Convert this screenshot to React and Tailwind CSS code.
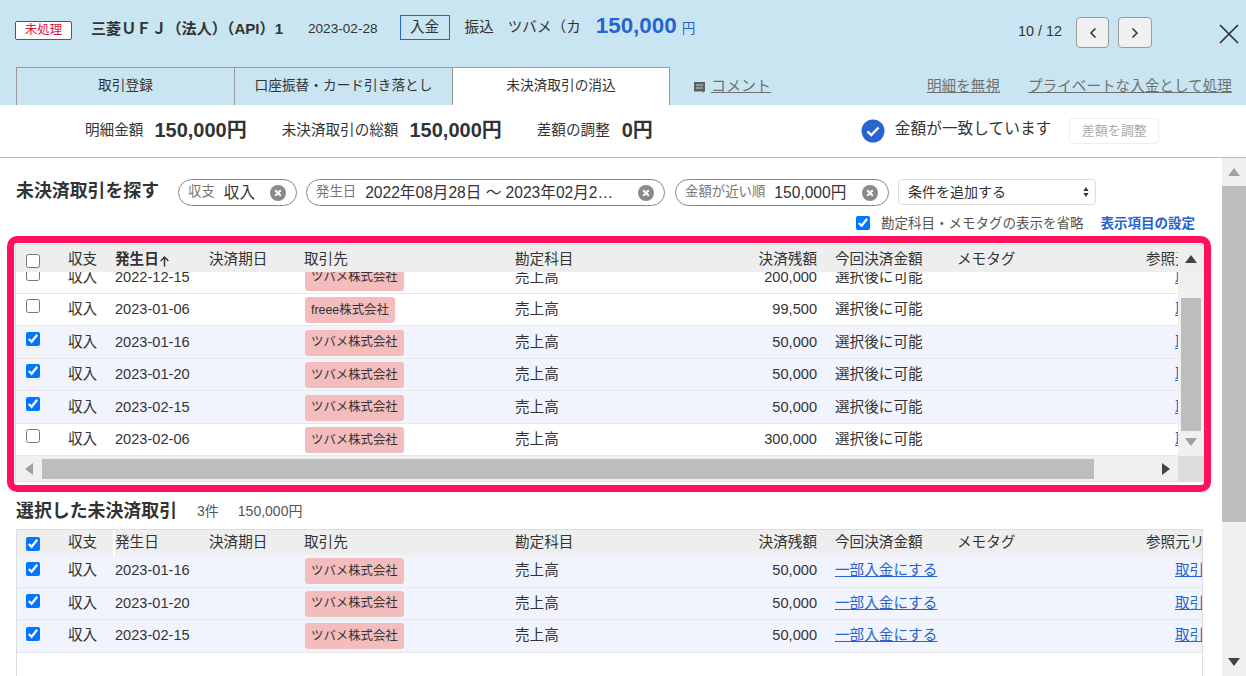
import React from 'react';
import { ChevronLeft, ChevronRight } from 'lucide-react';

const GRID = 'grid grid-cols-[52px_47px_94px_95px_211px_160px_142px_18px_122px_189px_1fr] items-center';

const searchRows = [
  { date: '2022-12-15', partner: 'ツバメ株式会社', amount: '200,000', checked: false },
  { date: '2023-01-06', partner: 'freee株式会社', amount: '99,500', checked: false },
  { date: '2023-01-16', partner: 'ツバメ株式会社', amount: '50,000', checked: true },
  { date: '2023-01-20', partner: 'ツバメ株式会社', amount: '50,000', checked: true },
  { date: '2023-02-15', partner: 'ツバメ株式会社', amount: '50,000', checked: true },
  { date: '2023-02-06', partner: 'ツバメ株式会社', amount: '300,000', checked: false },
];

const selectedRows = [
  { date: '2023-01-16' },
  { date: '2023-01-20' },
  { date: '2023-02-15' },
];

// full-width letters and brackets, as the bank feed writes them
const BANK_NAME = '三菱\uFF35\uFF26\uFF2A\uFF08法人\uFF09\uFF08API\uFF091';
const PAYEE = 'ツバメ\uFF08カ';

const Check = ({ checked, lift }) => (
  <input type="checkbox" checked={checked} readOnly className={`w-[14px] h-[14px] ml-[10px] m-0 accent-[#0075ff] ${lift}`} />
);

const Partner = ({ name }) => (
  <span className="justify-self-start inline-flex items-center h-[26px] px-[6px] ml-px rounded-[3px] bg-[#f4bdbd] text-[12.4px] whitespace-nowrap">{name}</span>
);

const Cross = () => (
  <svg width="16" height="16" viewBox="0 0 16 16" className="shrink-0">
    <circle cx="8" cy="8" r="8" fill="#8a8a8a" />
    <path d="M5.2 5.2l5.6 5.6M10.8 5.2l-5.6 5.6" stroke="#fff" strokeWidth="2" />
  </svg>
);

const Chip = ({ label, value, width }) => (
  <div className={`flex items-center h-[27px] pl-[9px] pr-[10px] border border-[#888] rounded-full ${width}`}>
    <span className="text-[13.4px] text-[#777] whitespace-nowrap">{label}</span>
    <span className="ml-[9px] text-[15.6px] whitespace-nowrap">{value}</span>
    <span className="ml-auto"><Cross /></span>
  </div>
);

const Head = ({ sorted, all, divider, size }) => (
  <div className={`${GRID} bg-[#eeeeee] shrink-0 ${size}`}>
    <input type="checkbox" checked={all} readOnly className="w-[14px] h-[14px] ml-[10px] m-0 mt-[2px] accent-[#0075ff]" />
    <span className={divider ? 'border-r-2 border-white h-full flex items-center' : ''}>収支</span>
    <span className={sorted ? 'font-bold flex items-center' : ''}>
      発生日
      {sorted && (
        <svg width="11" height="11" viewBox="0 0 10 10" className="mt-[3px]">
          <path d="M5 9.5V1M1.5 4.5L5 1l3.5 3.5" fill="none" stroke="#333" strokeWidth="1.3" />
        </svg>
      )}
    </span>
    <span>決済期日</span>
    <span>取引先</span>
    <span>勘定科目</span>
    <span className="text-right">決済残額</span>
    <span />
    <span>今回決済金額</span>
    <span>メモタグ</span>
    <span className="whitespace-nowrap">参照元リンク</span>
  </div>
);

const Arrow = ({ dir, color = '#555' }) => {
  const points = {
    up: '0,8 6,0 12,8',
    down: '0,0 6,8 12,0',
    left: '8,0 0,6 8,12',
    right: '0,0 8,6 0,12',
  };
  const vertical = dir === 'up' || dir === 'down';
  return (
    <svg width={vertical ? 12 : 8} height={vertical ? 8 : 12} viewBox={vertical ? '0 0 12 8' : '0 0 8 12'}>
      <polygon points={points[dir]} fill={color} />
    </svg>
  );
};

const App = () => {
  return (
    <div className="w-[1246px] h-[676px] overflow-hidden flex flex-col bg-white text-[14.6px] text-[#333] font-['Liberation_Sans','Noto_Sans_CJK_JP',sans-serif]">
      {/* top bar */}
      <div className="h-[105px] shrink-0 bg-[#c9e5f2] flex flex-col">
        <div className="h-[67px] flex items-start pt-[15px] pl-[15px]">
          <span className="mt-[6px] w-[57px] h-[19px] flex items-center justify-center bg-white border border-[#e0143c] rounded-[2px] text-[12.5px] text-[#e0143c]">未処理</span>
          <span className="ml-[19px] mt-[3px] w-[193px] font-bold text-[15.1px] whitespace-nowrap">{BANK_NAME}</span>
          <span className="ml-[24px] mt-[4px] text-[13.6px]">2023-02-28</span>
          <span className="ml-[22px] w-[50px] h-[25px] flex items-center justify-center border border-[#2864d0]">入金</span>
          <span className="ml-[15px] mt-[2px]">振込</span>
          <span className="ml-[14px] mt-[2px] w-[73px] whitespace-nowrap">{PAYEE}</span>
          <span className="ml-[15px] -mt-[6px] text-[22.4px] font-bold text-[#2864d0]">150,000</span>
          <span className="ml-[5px] mt-[4px] text-[13.6px] text-[#2864d0]">円</span>
          <span className="ml-auto mt-[6px] text-[14.4px]">10 / 12</span>
          <button className="ml-[14px] mt-[2px] w-[33px] h-[31px] flex items-center justify-center bg-[#f0f0f0] border border-[#999] rounded-[4px]">
            <ChevronLeft size={16} strokeWidth={2.5} />
          </button>
          <button className="ml-[9px] mt-[2px] w-[34px] h-[31px] flex items-center justify-center bg-[#f0f0f0] border border-[#999] rounded-[4px]">
            <ChevronRight size={16} strokeWidth={2.5} />
          </button>
          <svg width="20" height="20" viewBox="0 0 20 20" className="ml-[67px] mt-[9px] mr-[7px]">
            <path d="M1 1l18 18M19 1L1 19" stroke="#333" strokeWidth="1.7" />
          </svg>
        </div>
        <div className="flex-1 flex items-stretch pl-[16px]">
          <div className="w-[219px] flex items-center justify-center border border-b-0 border-[#999] text-[13.7px]">取引登録</div>
          <div className="w-[218px] flex items-center justify-center border border-b-0 border-l-0 border-[#999] text-[13.7px]">口座振替・カード引き落とし</div>
          <div className="w-[217px] flex items-center justify-center border border-b-0 border-l-0 border-[#999] bg-white text-[13.7px]">未決済取引の消込</div>
          <div className="ml-[23px] flex items-center text-[#6f7070]">
            <svg width="13" height="13" viewBox="0 0 13 13" className="mr-[5px] mt-[3px]">
              <path d="M1 1h11v9.5h-1.5V12L9 10.5H1z" fill="#5f5f5f" />
              <path d="M3 4h7M3 7h7" stroke="#c9e5f2" strokeWidth="0.9" />
            </svg>
            <a className="underline text-[15px]">コメント</a>
          </div>
          <a className="ml-[156px] mt-[2px] self-center underline text-[#6f7070]">明細を無視</a>
          <a className="ml-[28px] mt-[2px] self-center underline text-[#6f7070] whitespace-nowrap">プライベートな入金として処理</a>
        </div>
      </div>

      {/* totals */}
      <div className="h-[53px] shrink-0 flex items-center pl-[85px] border-b border-[#bbb]">
        <span>明細金額</span>
        <span className="ml-[11px] -mt-[2px] text-[20px] font-bold">150,000円</span>
        <span className="ml-[35px]">未決済取引の総額</span>
        <span className="ml-[11px] -mt-[2px] text-[20px] font-bold">150,000円</span>
        <span className="ml-[35px]">差額の調整</span>
        <span className="ml-[12px] -mt-[2px] text-[20px] font-bold">0円</span>
        <svg width="24" height="24" viewBox="0 0 24 24" className="ml-[208px]">
          <circle cx="12" cy="12" r="11.5" fill="#2864d0" />
          <path d="M6.5 12.3l3.8 3.8 7.3-7.6" fill="none" stroke="#fff" strokeWidth="2.4" />
        </svg>
        <span className="ml-[10px] -mt-[5px] text-[15.7px]">金額が一致しています</span>
        <button className="ml-[18px] w-[90px] h-[26px] border border-[#eee] rounded-[4px] text-[13px] text-[#aaa] whitespace-nowrap">差額を調整</button>
      </div>

      <div className="flex-1 min-h-0 flex">
        <div className="flex-1 min-w-0 overflow-hidden">
          {/* search */}
          <div className="flex items-start pt-[21px] pl-[16px] gap-[9px]">
            <h2 className="w-[153px] -mt-[1px] text-[17.9px] font-bold whitespace-nowrap">未決済取引を探す</h2>
            <Chip label="収支" value="収入" width="w-[119px]" />
            <Chip label="発生日" value="2022年08月28日 〜 2023年02月2…" width="w-[359px]" />
            <Chip label="金額が近い順" value="150,000円" width="ml-px w-[214px]" />
            <div className="w-[198px] h-[26px] flex items-center justify-between pl-[9px] pr-[6px] border border-[#ddd] rounded-[4px] text-[14px]">
              条件を追加する
              <svg width="6" height="10" viewBox="0 0 6 10">
                <path d="M3 0l2.6 4H.4zM3 10L.4 6h5.2z" fill="#333" />
              </svg>
            </div>
          </div>
          <div className="h-[23px] mt-[7px] flex items-center justify-end pr-[27px] text-[13.5px]">
            <input type="checkbox" checked readOnly className="w-[14px] h-[14px] m-0 mr-[11px] -mt-[3px] accent-[#0075ff]" />
            <span className="text-[#555]">勘定科目・メモタグの表示を省略</span>
            <a className="ml-[17px] font-bold text-[#2864d0]">表示項目の設定</a>
          </div>

          {/* highlighted table */}
          <div className="ml-[7px] mr-[11px] h-[256px] border-[7px] border-[#ff105b] rounded-[10px] flex flex-col">
            <div className="ml-px mt-px mb-[3px] flex-1 min-h-0 border border-r-0 border-[#dddddd] flex flex-col">
              <div className="flex-1 min-h-0 flex">
                <div className="flex-1 min-w-0 overflow-hidden flex flex-col">
                  <div className="relative z-10"><Head sorted all={false} size="h-[27px] pt-[3px]" /></div>
                  <div className="-mt-[11px]">
                    {searchRows.map((r) => (
                      <div key={r.date} className={`${GRID} h-[32.5px] pt-[2px] border-b border-[#e8e8e8] ${r.checked ? 'bg-[#f1f4fc]' : 'bg-white'}`}>
                        <Check checked={r.checked} lift="-mt-[8px]" />
                        <span>収入</span>
                        <span>{r.date}</span>
                        <span />
                        <Partner name={r.partner} />
                        <span>売上高</span>
                        <span className="text-right">{r.amount}</span>
                        <span />
                        <span>選択後に可能</span>
                        <span />
                        <a className="ml-[29px] underline text-[#2864d0] whitespace-nowrap">取引</a>
                      </div>
                    ))}
                  </div>
                </div>
                <div className="w-[26px] shrink-0 bg-[#f0f0f0] flex flex-col items-center">
                  <div className="h-[27px] w-full bg-[#eeeeee] flex items-center justify-center"><Arrow dir="up" color="#444" /></div>
                  <div className="w-[20px] h-[133px] mt-[26px] bg-[#bdbdbd]" />
                  <div className="mt-[7px]"><Arrow dir="down" color="#a0a0a0" /></div>
                </div>
              </div>
              <div className="h-[25px] shrink-0 flex bg-[#f0f0f0]">
                <div className="flex-1 flex items-center">
                  <span className="w-[26px] flex justify-center"><Arrow dir="left" color="#a0a0a0" /></span>
                  <div className="w-[1052px] h-[20px] bg-[#bdbdbd]" />
                  <span className="ml-auto mr-[8px] flex"><Arrow dir="right" color="#444" /></span>
                </div>
                <div className="w-[26px] bg-[#dcdcdc]" />
              </div>
            </div>
          </div>

          {/* selected */}
          <div className="mt-[9px] pl-[16px] h-[20px] flex items-center whitespace-nowrap">
            <h2 className="text-[17.9px] font-bold">選択した未決済取引</h2>
            <span className="ml-[20px] text-[14px] text-[#555]">3件</span>
            <span className="ml-[19px] text-[14px] text-[#555]">150,000円</span>
          </div>
          <div className="ml-[16px] mr-[19px] mt-[8px] h-[200px] border border-b-0 border-[#dddddd] overflow-hidden">
            <div className="-ml-px">
              <Head all divider size="h-[26px]" />
              <div className="-mt-px">
                {selectedRows.map((r) => (
                  <div key={r.date} className={`${GRID} h-[32.5px] pt-[1px] border-b border-[#e8e8e8] bg-[#f1f4fc]`}>
                    <Check checked lift="-mt-[5px]" />
                    <span>収入</span>
                    <span>{r.date}</span>
                    <span />
                    <Partner name="ツバメ株式会社" />
                    <span>売上高</span>
                    <span className="text-right">50,000</span>
                    <span />
                    <a className="underline text-[#2864d0] whitespace-nowrap">一部入金にする</a>
                    <span />
                    <a className="ml-[29px] underline text-[#2864d0] whitespace-nowrap">取引</a>
                  </div>
                ))}
              </div>
            </div>
          </div>
        </div>

        {/* page scrollbar */}
        <div className="w-[24px] shrink-0 bg-[#f0f0f0] flex flex-col items-center">
          <div className="h-[28px] flex items-center"><Arrow dir="up" color="#a0a0a0" /></div>
          <div className="w-full h-[336px] bg-[#bdbdbd]" />
          <div className="mt-auto h-[28px] flex items-center"><Arrow dir="down" color="#444" /></div>
        </div>
      </div>
    </div>
  );
};

export default App;
